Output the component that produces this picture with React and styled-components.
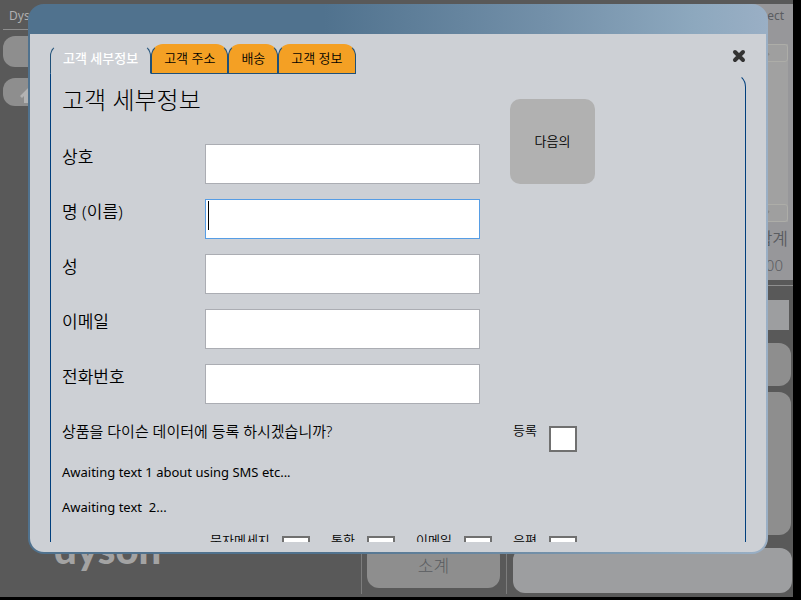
import React from "react";
import styled, { createGlobalStyle } from "styled-components";

const GlobalStyle = createGlobalStyle`
  *, *::before, *::after { box-sizing: border-box; }
  body {
    margin: 0;
    background: #000;
    color: #000;
    font-family: "Noto Sans", "Noto Sans CJK KR", sans-serif;
    font-size: 13px;
  }
  button, input { font: inherit; color: inherit; }
`;

const Page = styled.div`
  display: flex;
  height: 100vh;
  min-height: 560px;
  padding: 0 8px 3px 0;
`;

const Screen = styled.div`
  position: relative;
  flex: 1;
  display: grid;
  grid-template-columns: 1fr 286px;
  background: #595959;
  overflow: hidden;
`;

/* Till screen behind the dialog */
const Workspace = styled.div`
  display: flex;
  flex-direction: column;
  justify-content: space-between;
`;

const TopArea = styled.div`
  display: flex;
  flex-direction: column;
  align-items: flex-start;
  padding-left: 3px;
`;

const Brand = styled.div`
  align-self: stretch;
  height: 30px;
  padding: 6px 6px 0;
  border-bottom: 1px solid #8e8e8e;
  color: #b0b0b0;
  font-size: 12px;
  line-height: 20px;
`;

const TillButton = styled.button`
  display: flex;
  align-items: center;
  justify-content: ${(p) => (p.$start ? "flex-start" : "center")};
  width: ${(p) => p.$width || "auto"};
  height: ${(p) => p.$height}px;
  margin: 0;
  padding: 0 16px;
  border: 0;
  border-radius: 12px;
  background: ${(p) => (p.$light ? "#9d9ea0" : "#8e8e8e")};
  color: #5a5c60;
  font-size: 17px;
  font-weight: 300;
  line-height: 20px;
`;

const TopButtons = styled.div`
  display: flex;
  flex-direction: column;
  gap: 11px;
  margin-top: 6px;
`;

const BottomArea = styled.div`
  display: flex;
  align-items: flex-end;
  height: 60px;
`;

const LogoCell = styled.div`
  flex: 1;
  align-self: stretch;
  margin-bottom: 3px;
  padding-left: 54px;
  border-right: 1px solid #7d7d7d;
  color: #a3a3a3;
  font-family: Lato, sans-serif;
  font-size: 40px;
  font-weight: 900;
  line-height: 24px;
`;

const SubtotalCell = styled.div`
  display: flex;
  align-items: flex-end;
  width: 145px;
  height: 60px;
  margin-bottom: 3px;
  padding: 0 6px 6px 5px;
  border-right: 1px solid #7d7d7d;
`;

const Side = styled.div`
  display: flex;
  flex-direction: column;
  padding: 4px 0 4px 6px;
`;

const Receipt = styled.div`
  height: 276px;
  background: #97979a;
  color: #5a5c60;
`;

const ReceiptTitle = styled.div`
  padding-right: 9px;
  font-size: 12px;
  line-height: 24px;
  text-align: right;
`;

const ReceiptList = styled.div`
  display: flex;
  flex-direction: column;
  justify-content: space-between;
  align-items: flex-end;
  height: 178px;
  margin: 16px 5px 4px 0;
  background: #a1a1a1;
`;

const ScrollButton = styled.button`
  display: flex;
  align-items: center;
  justify-content: center;
  width: 40px;
  height: 18px;
  padding: 0;
  border: 1px solid #adada8;
  border-radius: 3px;
  background: #9f9f9f;
`;

const TotalLine = styled.div`
  padding-right: ${(p) => p.$inset}px;
  font-size: ${(p) => p.$size}px;
  font-weight: 350;
  line-height: 26px;
  text-align: right;
`;

const Rule = styled.div`
  height: 1px;
  margin: 5px 0 14px;
  background: #8e8e8e;
`;

const Entry = styled.input`
  width: auto;
  height: 30px;
  margin: 0 4px 13px 0;
  border: 0;
  background: #9d9ea0;
`;

const SideButtons = styled.div`
  display: flex;
  flex-direction: column;
  gap: 6px;
  padding-right: 2px;
`;

const PayArea = styled.div`
  margin: auto 1px 0 0;
`;

/* Dialog */
const Dialog = styled.section`
  position: absolute;
  inset: 4px 25px 43px 28px;
  display: flex;
  padding: 30px 2px 2px;
  border-radius: 16px;
  background: linear-gradient(90deg, #50728e 40%, #7390a9 70%, #8da8be 90%, #9aafc5);
`;

const DialogBody = styled.div`
  flex: 1;
  display: flex;
  flex-direction: column;
  min-width: 0;
  padding: 10px 20px;
  border-radius: 0 0 14px 14px;
  background: #cdd0d5;
`;

const TabBar = styled.div`
  display: flex;
  align-items: flex-start;
  height: 29px;
`;

const Tab = styled.button`
  height: 30px;
  padding: 0 12px 2px;
  border: 1px solid #1f5078;
  border-radius: 12px 12px 0 0;
  border-top-color: transparent;
  border-bottom-color: ${(p) => (p.$active ? "transparent" : "#1f5078")};
  background: ${(p) => (p.$active ? "transparent" : "#f4a024")};
  color: ${(p) => (p.$active ? "#fff" : "#000")};
  font-size: 13px;
  font-weight: ${(p) => (p.$active ? 500 : 350)};
  line-height: 26px;
  white-space: nowrap;
`;

const CloseButton = styled.button`
  display: flex;
  margin: 5px 0 0 auto;
  padding: 0;
  border: 0;
  background: none;
`;

const Panel = styled.div`
  flex: 1;
  min-height: 0;
  overflow: hidden;
  padding: 10px 11px 0;
  border: solid #003f7d;
  border-width: 0 1px;
  border-top: 1px solid transparent;
  border-radius: 0 14px 0 0;
`;

const Columns = styled.div`
  display: flex;
  align-items: flex-start;
  gap: 30px;
`;

const Form = styled.form`
  display: flex;
  flex-direction: column;
  gap: 15px;
  width: 418px;
`;

const Title = styled.h1`
  height: 45px;
  margin: 0;
  font-size: 24px;
  font-weight: 300;
  line-height: 32px;
`;

const Field = styled.label`
  display: grid;
  grid-template-columns: 143px 1fr;
  font-size: 17px;
  font-weight: 350;
  line-height: 26px;
`;

const TextInput = styled.input`
  width: 100%;
  height: 40px;
  padding: 0 4px;
  border: 1px solid ${(p) => (p.$active ? "#569de5" : "#abadb3")};
  outline: 0;
  background: #fff;
  ${(p) =>
    p.$active &&
    "background: linear-gradient(#000, #000) 2px 1px / 1px 29px no-repeat #fff; caret-color: transparent;"}
`;

const NextButton = styled.button`
  width: 85px;
  height: 85px;
  margin-top: 15px;
  padding: 0 0 2px;
  border: 0;
  border-radius: 10px;
  background: #b1b1b1;
  font-weight: 350;
`;

const Question = styled.div`
  display: flex;
  justify-content: space-between;
  width: 515px;
  height: 35px;
  margin-top: 16px;
`;

const QuestionText = styled.span`
  font-size: 15px;
  font-weight: 350;
  line-height: 22px;
`;

const Note = styled.p`
  margin: 0;
  font-size: 13px;
  line-height: 35px;
  white-space: pre;
`;

const Contacts = styled.div`
  display: flex;
  justify-content: space-between;
  width: 367px;
  margin: 5px 0 0 148px;
`;

const CheckLabel = styled.label`
  display: flex;
  gap: 12px;
  font-weight: 350;
  line-height: 20px;
`;

const CheckBox = styled.input`
  appearance: none;
  width: 28px;
  height: 26px;
  margin: 6px 0 0;
  border: 2px solid #707070;
  background: #fff;
`;

const fields = [
  { id: "company", label: "상호" },
  { id: "first", label: "명 (이름)", active: true },
  { id: "last", label: "성" },
  { id: "email", label: "이메일" },
  { id: "phone", label: "전화번호" },
];

const tabs = ["고객 세부정보", "고객 주소", "배송", "고객 정보"];
const contacts = ["문자메세지", "통화", "이메일", "우편"];

function Check({ label }) {
  return (
    <CheckLabel>
      {label}
      <CheckBox type="checkbox" />
    </CheckLabel>
  );
}

function Till() {
  return (
    <>
      <Workspace>
        <TopArea>
          <Brand>Dyson</Brand>
          <TopButtons>
            <TillButton $width="120px" $height={31} aria-label="Menu" />
            <TillButton $width="120px" $height={28} $start aria-label="Home">
              <svg width="24" height="22" viewBox="0 0 24 22" fill="#b3b3b3">
                <path d="M12 4 1 15l2 2 2-2v7h5v-5h4v5h5v-7l2 2 2-2z" />
              </svg>
            </TillButton>
          </TopButtons>
        </TopArea>
        <BottomArea>
          <LogoCell>dyson</LogoCell>
          <SubtotalCell>
            <TillButton $width="100%" $height={44}>
              소계
            </TillButton>
          </SubtotalCell>
        </BottomArea>
      </Workspace>
      <Side>
        <Receipt>
          <ReceiptTitle>Connect</ReceiptTitle>
          <ReceiptList>
            <ScrollButton aria-label="Up">
              <svg width="30" height="8" viewBox="0 0 30 8" fill="none" stroke="#888" strokeWidth="2">
                <path d="M8 6l4-4 4 4" />
              </svg>
            </ScrollButton>
            <ScrollButton aria-label="Down">
              <svg width="30" height="8" viewBox="0 0 30 8" fill="none" stroke="#888" strokeWidth="2">
                <path d="M8 2l4 4 4-4" />
              </svg>
            </ScrollButton>
          </ReceiptList>
          <TotalLine $inset={5} $size={17}>합계</TotalLine>
          <TotalLine $inset={10} $size={15}>0.00</TotalLine>
        </Receipt>
        <Rule />
        <Entry aria-label="Entry" />
        <SideButtons>
          <TillButton $height={43} aria-label="Action" />
          <TillButton $height={143} aria-label="Enter" />
        </SideButtons>
        <PayArea>
          <TillButton $width="100%" $height={45} $light aria-label="Pay" />
        </PayArea>
      </Side>
    </>
  );
}

export default function App() {
  return (
    <Page>
      <GlobalStyle />
      <Screen>
        <Till />
        <Dialog role="dialog" aria-label="고객 세부정보">
          <DialogBody>
            <TabBar role="tablist">
              {tabs.map((name, i) => (
                <Tab key={name} role="tab" $active={i === 0} aria-selected={i === 0}>
                  {name}
                </Tab>
              ))}
              <CloseButton aria-label="Close">
                <svg width="14" height="14" viewBox="0 0 14 14" stroke="#333" strokeWidth="4" strokeLinecap="round">
                  <path d="M3 3l8 8M11 3l-8 8" />
                </svg>
              </CloseButton>
            </TabBar>
            <Panel>
              <Columns>
                <Form>
                  <Title>고객 세부정보</Title>
                  {fields.map((f) => (
                    <Field key={f.id}>
                      {f.label}
                      <TextInput name={f.id} $active={f.active} />
                    </Field>
                  ))}
                </Form>
                <NextButton>다음의</NextButton>
              </Columns>
              <Question>
                <QuestionText>상품을 다이슨 데이터에 등록 하시겠습니까?</QuestionText>
                <Check label="등록" />
              </Question>
              <Note>Awaiting text 1 about using SMS etc...</Note>
              <Note>{"Awaiting text  2..."}</Note>
              <Contacts>
                {contacts.map((c) => (
                  <Check key={c} label={c} />
                ))}
              </Contacts>
            </Panel>
          </DialogBody>
        </Dialog>
      </Screen>
    </Page>
  );
}
